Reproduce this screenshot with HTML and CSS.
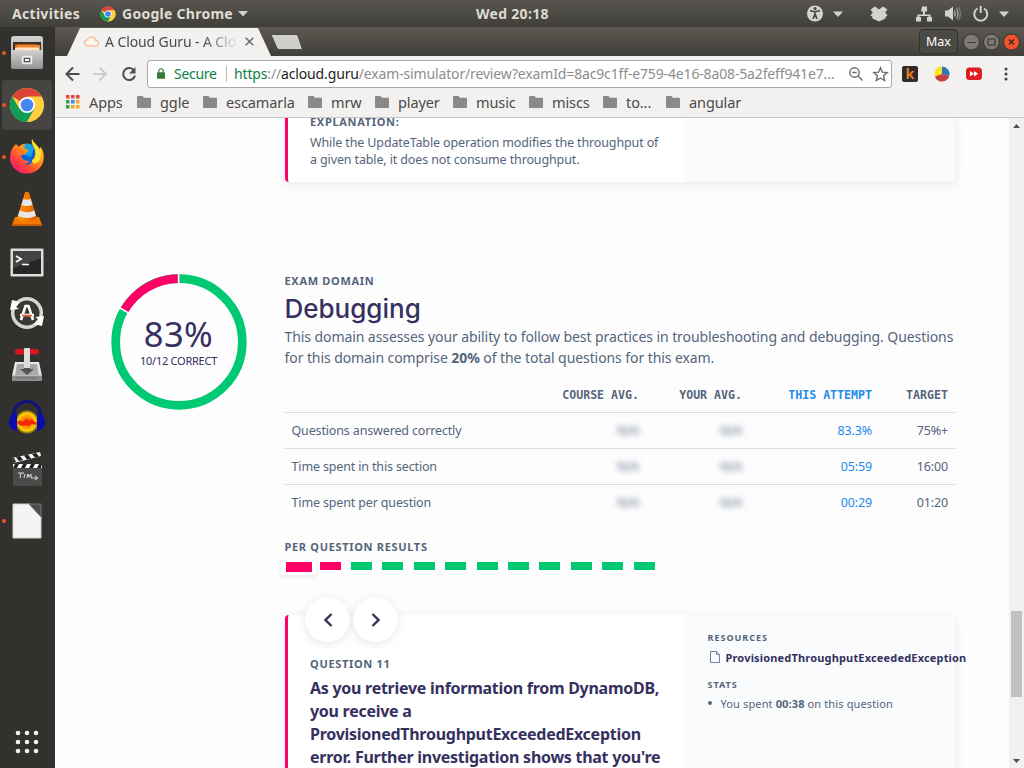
FILE: index.html
```html
<!DOCTYPE html>
<html lang="en">
<head>
<meta charset="utf-8">
<title>A Cloud Guru</title>
<link rel="stylesheet" href="styles.css">
</head>
<body>
<svg class="defs" width="0" height="0">
  <defs>
    <symbol id="chrome" viewBox="0 0 36 36">
      <circle cx="18" cy="18" r="17" fill="#ffcd40"/>
      <path d="M18 18 3.3 9.5A17 17 0 0 1 32.7 9.5H18Z" fill="#db4437"/>
      <path d="M3.3 9.5A17 17 0 0 0 18 35L25.3 22.3 18 18 10.6 22.2Z" fill="#0f9d58"/>
      <path d="M18 10h14.9A17 17 0 0 1 18 35l7.3-12.6Z" fill="#ffcd40"/>
      <circle cx="18" cy="18" r="8" fill="#fff"/>
      <circle cx="18" cy="18" r="6.3" fill="#4285f4"/>
    </symbol>
    <symbol id="folder" viewBox="0 0 14 12">
      <path d="M1.2 0h4.3L7 1.8h5.8A1.2 1.2 0 0 1 14 3v7.8a1.2 1.2 0 0 1-1.2 1.2H1.2A1.2 1.2 0 0 1 0 10.800V1.200A1.200 1.200 0 0 1 1.200 0Z" fill="#8b8987"/>
    </symbol>
    <linearGradient id="metal" x1="0" y1="0" x2="0" y2="1"><stop offset="0" stop-color="#d2d2d2"/><stop offset="1" stop-color="#929292"/></linearGradient>
    <linearGradient id="fox" x1=".9" y1="0" x2=".1" y2="1"><stop offset="0" stop-color="#ffe226"/><stop offset=".45" stop-color="#ff8a16"/><stop offset=".75" stop-color="#ff3647"/><stop offset="1" stop-color="#e31587"/></linearGradient>
    <linearGradient id="cone" x1="0" x2="1"><stop offset="0" stop-color="#ff9a1c"/><stop offset=".5" stop-color="#f57900"/><stop offset="1" stop-color="#d85f00"/></linearGradient>
    <radialGradient id="wave"><stop offset="0" stop-color="#ff2a00"/><stop offset=".4" stop-color="#ff8a00"/><stop offset=".75" stop-color="#ffd400"/><stop offset="1" stop-color="#ffd400" stop-opacity=".1"/></radialGradient>
  </defs>
</svg>

<header class="panel">
  <span class="panel-activities">Activities</span>
  <svg class="panel-chrome" width="16" height="16"><use href="#chrome"/></svg>
  <span class="panel-app">Google Chrome</span>
  <svg class="panel-caret" width="10" height="6"><path d="M0 0h10L5 5.500Z" fill="#d5d3cf"/></svg>
  <span class="panel-clock">Wed 20:18</span>
  <span class="panel-tray">
    <svg width="209" height="20" viewBox="0 0 209 20">
      <circle cx="8" cy="9.500" r="8" fill="#d5d3cf"/>
      <circle cx="8" cy="4.500" r="1.600" fill="#4c4a44"/>
      <path d="M3 6.700 6.500 7.500h3L13 6.700M8 7.500v3M8 10l-2 5M8 10l2 5" stroke="#4c4a44" stroke-width="1.700" fill="none"/>
      <path d="M26 7.500h10L31 13Z" fill="#d5d3cf"/>
      <path d="m68 2.500-4.500 3 2.300 3-2.300 3 2 1.400v1.500l6.500 3 6.500-3v-1.500l2-1.400-2.300-3 2.300-3-4.500-3-4 3Z" fill="#d5d3cf"/>
      <path d="M115 2.500h5v5h-2v3h5.500v2.500h1.500v4.500h-5V13h1.500v-1h-9v1h1.500v4.500h-5V13h1.500v-2.500h5.500v-3h-2Z" fill="#d5d3cf"/>
      <path d="M138 6.500h3l5-4v14l-5-4h-3Z" fill="#d5d3cf"/>
      <path d="M147.500 6.500q1.500 3 0 6M149.500 4.500q3 5 0 10" stroke="#aaa8a3" stroke-width="1.300" fill="none"/><path d="M151.500 3q4 6.500 0 13" stroke="#7d7b76" stroke-width="1.300" fill="none"/>
      <path d="M170.500 4.500a6.500 6.500 0 1 0 6.500 0M173.700 2v7" stroke="#d5d3cf" stroke-width="2" fill="none"/>
      <path d="M192 7.500h10L197 13Z" fill="#d5d3cf"/>
    </svg>
  </span>
</header>

<div class="desktop">
  <nav class="dock">
    <div class="dock-item running"><svg width="34" height="36" viewBox="0 0 34 36"><rect x="1" y="1" width="32" height="33" rx="3" fill="url(#metal)"/><path d="M3 7h28v9H3Z" fill="#3b332b"/><path d="M5 9h22v7H5Z" fill="#b5590f"/><path d="M7 10h23v6H5Z" fill="#f5832c"/><path d="M5 12.500h24V16H5Z" fill="#ffe5c4"/><path d="M1 15h32v17a2 2 0 0 1-2 2H3a2 2 0 0 1-2-2Z" fill="url(#metal)"/><rect x="12.500" y="21.500" width="9" height="7" rx="1" fill="none" stroke="#eee" stroke-width="1.500"/><rect x="14.500" y="23.500" width="5" height="3" fill="#f2f2f2" stroke="#555"/></svg></div>
    <div class="dock-item running active"><svg width="36" height="36"><use href="#chrome"/></svg></div>
    <div class="dock-item running"><svg width="36" height="38" viewBox="0 0 36 38"><circle cx="18" cy="20" r="14" fill="#0a63d8"/><path d="M13 7q8-4 12 3l-3 9-9-3Z" fill="#12a5e8"/><path d="M23 1c-1 5 2 7 3 11 1 5-1 9-3 10 1 4-5 6-8 4 3 0 4-2 6-3-4 0-8-1-9-5 1-2 3-1 5-2 0-2 2-2 3-4l-4-1q-1-2 0-5c-3 0-5 1-6 3L7 6C1 11 0 19 2 25c4 11 17 13 25 8 9-5 9-16 6-22l-2-2v3C29 7 25 6 23 1Z" fill="url(#fox)"/><path d="M23 1c-1 5 2 7 3 11 2 6-1 10-3 10 0 5 5 5 8-1s1-8 0-12v3C29 7 25 6 23 1Z" fill="#ffe02c"/></svg></div>
    <div class="dock-item"><svg width="32" height="36" viewBox="0 0 32 36"><path d="M4 26h24l3 8H1Z" fill="#f57900"/><path d="M1 33h30v2H1Z" fill="#c95c00"/><path d="M14 1.500q2-1.500 4 0l8 26q-10 6-20 0Z" fill="url(#cone)"/><path d="m12.300 8-1.800 6q5.500 2 11 0l-1.800-6q-3.700 1.500-7.400 0ZM8.700 19.500l-1.600 5.500q9 4 17.800 0l-1.600-5.500q-7.300 3.500-14.600 0Z" fill="#e6e6e6"/></svg></div>
    <div class="dock-item low"><svg width="34" height="30" viewBox="0 0 34 30"><rect x=".5" y=".5" width="33" height="28" rx="1" fill="#dcdcda"/><rect x="3" y="3" width="28" height="23" fill="#262626"/><path d="M3 3h28v7L3 20Z" fill="#444"/><path d="m6 8 5 3-5 3" stroke="#fff" stroke-width="1.800" fill="none"/><path d="M12 16.500h7" stroke="#fff" stroke-width="1.600"/></svg></div>
    <div class="dock-item"><svg width="34" height="34" viewBox="0 0 34 34"><circle cx="17" cy="17" r="14.300" fill="#3a3935" stroke="#d6d6d3" stroke-width="3.500"/><path d="M2 4 0 14l9-1-3-2 4-5Z" fill="#fff"/><path d="m32 30 2-10-9 1 3 2-4 5Z" fill="#fff"/><path d="m11 24 4.500-14h3L23 24M10 19h14" stroke="#fff" stroke-width="2.600" fill="none"/><path d="M12 19.500h10" stroke="#e8541b" stroke-width="1.500"/></svg></div>
    <div class="dock-item"><svg width="32" height="34" viewBox="0 0 32 34"><path d="M4 14h24l3 14H1Z" fill="#e8e8e8"/><path d="M6 16h20l2 11H4Z" fill="#a8a8a8"/><path d="M1 27.500h30V33H1Z" fill="#8c8c8c"/><path d="M5 30h22" stroke="#555" stroke-dasharray="1 1"/><path d="M13 14h6v7h4l-7 6-7-6h4Z" fill="#555"/><path d="M13 3h6v17h-6Z" fill="#dcdcdc"/><rect x="4" y="1" width="24" height="5.500" rx="2.700" fill="#d9161c"/><rect x="13" y="0" width="6" height="9" rx="1" fill="#dedede"/></svg></div>
    <div class="dock-item"><svg width="38" height="34" viewBox="0 0 38 34"><ellipse cx="19" cy="22" rx="12" ry="12" fill="url(#wave)"/><path d="m9 22 3-2 3 2 3-3 3 2 3-2 3 3 2 0-1 3-4-1-3 2-3-1-4 1-3-1Z" fill="#f32a00"/><path d="M5 18C5-4 33-4 33 18" stroke="#10107e" stroke-width="3" fill="none"/><path d="M9 13v18q-8-1-8-9t8-9ZM29 13v18q8-1 8-9t-8-9Z" fill="#0c0cb0"/></svg></div>
    <div class="dock-item"><svg width="32" height="36" viewBox="0 0 32 36"><rect x="2" y="17" width="29" height="18" rx="1" fill="#4b4b4a"/><path d="M2 13h29v4H2Z" fill="#fff"/><path d="M4 13h4l-2 4H2ZM12 13h4l-2 4h-4ZM20 13h4l-2 4h-4ZM28 13h3l-1 4h-4Z" fill="#222"/><path d="M1 7 29 1l1 4L3 12Z" fill="#f2f2f2"/><path d="m5 6 4-1 3 4-4 1ZM13 4.500l4-1 3 4-4 1ZM21 3l4-1 3 3.500-4 1ZM1 7h2l2 4-2 1Z" fill="#222"/><path d="M7 22h6M10 22l-1 5M14 23l-1 4M16 27l1-4 1 3 2-3v4M20 27h6M24 25l3 2-3 2" stroke="#ddd" fill="none"/></svg></div>
    <div class="dock-item running"><svg width="30" height="36" viewBox="0 0 30 36"><path d="M1 1h17l11 12v22H1Z" fill="#f4f4f4" stroke="#d0d0d0"/><path d="M17 1h12v13Z" fill="#4d4d4d" stroke="#777"/></svg></div>
    <svg class="dock-grid" width="24" height="24" viewBox="0 0 24 24" fill="#f2f1ef"><circle cx="3" cy="3" r="2.300"/><circle cx="12" cy="3" r="2.300"/><circle cx="21" cy="3" r="2.300"/><circle cx="3" cy="12" r="2.300"/><circle cx="12" cy="12" r="2.300"/><circle cx="21" cy="12" r="2.300"/><circle cx="3" cy="21" r="2.300"/><circle cx="12" cy="21" r="2.300"/><circle cx="21" cy="21" r="2.300"/></svg>
  </nav>

  <main class="window">
    <div class="titlebar">
      <div class="tab">
        <svg width="16" height="11" viewBox="0 0 18 12"><path d="M4.500 11h9.500a3 3 0 0 0 .5-6A5 5 0 0 0 5 4 3.600 3.600 0 0 0 4.500 11Z" fill="#fff6ef" stroke="#fab48c" stroke-width="1.300"/></svg>
        <span class="tab-title">A Cloud Guru - A Clo</span>
        <svg width="9" height="9" viewBox="0 0 9 9"><path d="m.7.700 7.600 7.600m0-7.600L.7 8.300" stroke="#6b6a68" stroke-width="1.500"/></svg>
      </div>
      <svg class="new-tab" width="34" height="16" viewBox="0 0 34 16"><path d="M1 .500h25q1.500 0 2 1.500l4.500 13.500H9q-1.500 0-2-1.500Z" fill="#d0cecc" stroke="#34332f" stroke-width=".7"/></svg>
      <div class="win-controls">
        <span class="user">Max</span>
        <svg width="58" height="20" viewBox="0 0 58 20"><g fill="#7c7a73" stroke="#35342f"><circle cx="9.500" cy="10" r="8"/><circle cx="29.500" cy="10" r="8"/></g><circle cx="49.500" cy="10" r="8" fill="#f0532d" stroke="#35342f"/><path d="M5.500 10.500h8M26 7h7v6h-7Z" stroke="#3a3934" stroke-width="1.200" fill="none"/><path d="m47 7.500 5 5m0-5-5 5" stroke="#3a2a20" stroke-width="1.300"/></svg>
      </div>
    </div>

    <div class="toolbar">
      <svg class="nav-icons" width="72" height="16" viewBox="0 0 72 16" fill="none" stroke-width="2"><path d="M14.500 8H2M8 1.500 1.500 8 8 14.500" stroke="#4f4d4b"/><path d="M28 8h12.500M34.500 1.500 41 8l-6.500 6.500" stroke="#cfcdcb"/><path d="M69 4.500A6 6 0 1 0 70 9.500" stroke="#4f4d4b"/><path d="M70.500 1v6.500H64Z" fill="#4f4d4b" stroke="none"/></svg>
      <div class="omnibox">
        <svg width="8" height="11" viewBox="0 0 9 12"><rect y="4.500" width="9" height="7.500" rx=".8" fill="#2f7d36"/><path d="M2 5V3.200a2.500 2.500 0 0 1 5 0V5" stroke="#2f7d36" stroke-width="1.300" fill="none"/></svg>
        <span class="secure">Secure</span>
        <span class="omni-sep"></span>
        <span class="url"><span class="scheme">https</span>://<span class="host">acloud.guru</span>/exam-simulator/review?examId=8ac9c1ff-e759-4e16-8a08-5a2feff941e7...</span>
        <svg class="omni-icons" width="42" height="16" viewBox="0 0 42 16" fill="none" stroke="#6a6a6a" stroke-width="1.400"><circle cx="6.500" cy="6.500" r="4.700"/><path d="m10 10 4.500 4.500M4.300 6.500h4.400"/><path d="m32.500 1.800 1.900 4.400 4.800.4-3.600 3.200 1.100 4.700-4.200-2.500-4.200 2.500 1.100-4.700-3.600-3.200 4.800-.4Z"/></svg>
      </div>
      <div class="extensions">
        <span class="ext-k">k</span>
        <svg width="16" height="16" viewBox="0 0 16 16"><path d="M8 8V.500A7.500 7.500 0 0 1 15.200 10Z" fill="#2f76b5"/><path d="M8 8V.500A7.500 7.500 0 0 0 .9 10.500Z" fill="#f8e81c"/><path d="M8 8 .9 10.500a7.500 7.500 0 0 0 14.300-.5Z" fill="#c5403f"/></svg>
        <svg width="16" height="14" viewBox="0 0 16 14"><rect y=".5" width="16" height="12.500" rx="3.500" fill="#df1d22"/><path d="m4 4 4 2.800-4 2.800ZM8 4l4.200 2.800L8 9.600Z" fill="#fff"/></svg>
        <svg width="4" height="14" viewBox="0 0 4 14" fill="#4a4846"><circle cx="2" cy="2" r="1.600"/><circle cx="2" cy="7" r="1.600"/><circle cx="2" cy="12" r="1.600"/></svg>
      </div>
    </div>

    <div class="bookmarks">
      <svg width="14" height="14" viewBox="0 0 14 14"><path d="M0 0h3.500v3.500H0ZM5 0h3.500v3.500H5ZM10 0h3.500v3.500H10Z" fill="#e8453c"/><path d="M0 5h3.500v3.500H0ZM0 10h3.500v3.500H0Z" fill="#34a04f"/><path d="M5 5h3.500v3.500H5Z" fill="#4285f4"/><path d="M10 5h3.500v3.500H10ZM5 10h3.500v3.500H5ZM10 10h3.500v3.500H10Z" fill="#f6a623"/></svg>
      <span class="bm w-apps">Apps</span>
      <svg width="14" height="12"><use href="#folder"/></svg><span class="bm w-ggle">ggle</span>
      <svg width="14" height="12"><use href="#folder"/></svg><span class="bm w-esc">escamarla</span>
      <svg width="14" height="12"><use href="#folder"/></svg><span class="bm w-mrw">mrw</span>
      <svg width="14" height="12"><use href="#folder"/></svg><span class="bm w-player">player</span>
      <svg width="14" height="12"><use href="#folder"/></svg><span class="bm w-music">music</span>
      <svg width="14" height="12"><use href="#folder"/></svg><span class="bm w-miscs">miscs</span>
      <svg width="14" height="12"><use href="#folder"/></svg><span class="bm w-to">to...</span>
      <svg width="14" height="12"><use href="#folder"/></svg><span class="bm w-angular">angular</span>
    </div>

    <div class="viewport">
      <div class="page">
        <article class="card card-prev">
          <div class="card-body">
            <h4 class="label explanation">EXPLANATION:</h4>
            <p class="small-copy">While the UpdateTable operation modifies the throughput of<br>a given table, it does not consume throughput.</p>
          </div>
          <aside class="card-side"></aside>
        </article>

        <section class="domain">
          <div class="gauge">
            <svg width="136" height="136" viewBox="0 0 136 136" fill="none">
              <circle cx="68" cy="68" r="63.300" stroke="#00c974" stroke-width="8.700"/>
              <path d="M68 4.700A63.300 63.300 0 0 0 13.180 36.350" stroke="#ff0066" stroke-width="8.700"/>
              <path d="M67.600 0v10M8.500 33.800l9 5.100" stroke="#fff" stroke-width="1.600"/>
            </svg>
            <div class="gauge-text"><span class="gauge-pct">83%</span><span class="gauge-sub">10/12 CORRECT</span></div>
          </div>
          <div class="domain-body">
            <h4 class="label label-domain">EXAM DOMAIN</h4>
            <h2 class="domain-title">Debugging</h2>
            <p class="domain-copy">This domain assesses your ability to follow best practices in troubleshooting and debugging. Questions<br>for this domain comprise <b>20%</b> of the total questions for this exam.</p>
            <div class="stats">
              <div class="row head"><span></span><span>COURSE AVG.</span><span>YOUR AVG.</span><span class="blue">THIS ATTEMPT</span><span>TARGET</span></div>
              <div class="row"><span>Questions answered correctly</span><span class="na">N/A</span><span class="na">N/A</span><span class="blue">83.3%</span><span>75%+</span></div>
              <div class="row"><span>Time spent in this section</span><span class="na">N/A</span><span class="na">N/A</span><span class="blue">05:59</span><span>16:00</span></div>
              <div class="row"><span>Time spent per question</span><span class="na">N/A</span><span class="na">N/A</span><span class="blue">00:29</span><span>01:20</span></div>
            </div>
            <h4 class="label label-results">PER QUESTION RESULTS</h4>
            <div class="results">
              <span class="current"><i></i></span><i class="wrong"></i><i></i><i></i><i></i><i></i><i></i><i></i><i></i><i></i><i></i><i></i>
            </div>
          </div>
        </section>

        <article class="card card-next">
          <div class="card-nav">
            <span class="round"><svg width="10" height="14" viewBox="0 0 10 14"><path d="M8.500 1 2.500 7l6 6" stroke="#35315f" stroke-width="2.400" fill="none"/></svg></span>
            <span class="round"><svg width="10" height="14" viewBox="0 0 10 14"><path d="m1.500 1 6 6-6 6" stroke="#35315f" stroke-width="2.400" fill="none"/></svg></span>
          </div>
          <div class="card-body">
            <h4 class="label label-question">QUESTION 11</h4>
            <p class="question">As you retrieve information from DynamoDB,<br>you receive a<br>ProvisionedThroughputExceededException<br>error. Further investigation shows that you're</p>
          </div>
          <aside class="card-side">
            <h5 class="mini">RESOURCES</h5>
            <div class="resource"><svg width="10" height="12" viewBox="0 0 10 12"><path d="M.5.500h6l3 3v8h-9ZM6.500.500v3h3" fill="none" stroke="#6d87a3"/></svg><a>ProvisionedThroughputExceededException</a></div>
            <h5 class="mini mini-stats">STATS</h5>
            <div class="stat"><span class="dot"></span><span>You spent <b>00:38</b> on this question</span></div>
          </aside>
        </article>
      </div>
      <div class="scrollbar">
        <svg width="7" height="4"><path d="M0 4h7L3.500 0Z" fill="#505050"/></svg>
        <span class="thumb"></span>
        <svg width="7" height="4"><path d="M0 0h7L3.500 4Z" fill="#505050"/></svg>
      </div>
    </div>
  </main>
</div>
</body>
</html>
```
FILE: styles.css
```css
* { box-sizing: border-box; margin: 0; padding: 0; }
body {
  width: 1024px; height: 768px; overflow: hidden;
  display: flex; flex-direction: column;
  font-family: "Noto Sans", sans-serif; color: #54657a; background: #fdfdfe;
  white-space: nowrap;
}
svg { display: block; flex: none; }
.defs { position: absolute; }

/* Desktop panel */
.panel {
  height: 27px; flex: none; display: flex; align-items: center;
  background: linear-gradient(#57554e, #403f3a);
  color: #dfdbd2; font-size: 14px; font-weight: 700; letter-spacing: .3px;
}
.panel-activities { width: 88px; padding-left: 12px; }
.panel-chrome { margin-left: 12px; }
.panel-app { margin-left: 6px; width: 111px; letter-spacing: .27px; }
.panel-caret { margin-left: 5px; }
.panel-clock { margin-left: 228px; width: 331px; padding-bottom: 1px; }
.panel-tray { display: block; height: 20px; }

.desktop { flex: 1; display: flex; min-height: 0; }
.dock { width: 55px; padding-right: 1px; flex: none; background: #33312d; display: flex; flex-direction: column; align-items: center; }
.dock-item { width: 50px; height: 50px; margin: 1px 0; border-radius: 4px; display: flex; align-items: center; justify-content: center; position: relative; flex: none; }
.dock-item.active { background: #474541; }
.dock-item.low { padding-top: 3px; }
.dock-item.running::before { content: ""; position: absolute; left: 0; top: 23px; width: 4px; height: 4px; border-radius: 50%; background: #e95420; }
.dock-grid { margin-top: auto; margin-bottom: 14px; }

/* Browser chrome */
.window { flex: 1; min-width: 0; display: flex; flex-direction: column; }
.titlebar { height: 29px; flex: none; display: flex; background: linear-gradient(#5b5951, #413f39); }
.tab {
  margin: 1px 0 0 12px; width: 204px; height: 28px; padding: 0 16px 1px; flex: none;
  display: flex; align-items: center; background: #f2f1f0;
  clip-path: polygon(13px 0, 191px 0, 204px 100%, 0 100%);
}
.tab-title {
  margin-left: 6px; width: 140px; overflow: hidden; font-size: 14px; letter-spacing: -.1px; color: #4a4a4a;
  -webkit-mask-image: linear-gradient(90deg, #000 98px, transparent 134px);
}
.new-tab { margin-top: 7px; margin-left: -1px; }
.win-controls { margin-left: auto; display: flex; align-items: center; gap: 4px; padding-right: 4px; }
.user { width: 39px; height: 25px; border: 1px solid #32312d; border-radius: 4px; color: #fff; font-size: 12.5px; line-height: 23px; text-align: center; background: #4b4943; }
.toolbar { height: 36px; flex: none; padding-left: 10px; display: flex; align-items: center; background: #f2f1f0; }
.nav-icons { margin-right: 10px; }
.omnibox { width: 745px; height: 28px; border: 1px solid #a9a7a5; border-radius: 3px; background: #fff; display: flex; align-items: center; padding: 0 0 1px 9px; font-size: 14px; flex: none; }
.secure { margin-left: 9px; width: 52px; color: #0b8043; letter-spacing: -.3px; }
.omni-sep { width: 1px; height: 16px; background: #bbb; }
.url { margin-left: 7px; width: 612px; letter-spacing: -.15px; color: #8d8d8d; }
.scheme { color: #0b8043; }
.host { color: #222; }
.omni-icons { margin-left: 2px; }
.extensions { display: flex; align-items: center; margin-left: 10px; gap: 16px; }
.extensions svg:last-child { margin-left: 6px; }
.ext-k { width: 16px; height: 16px; border-radius: 2px; background: #2e2c2a; color: #f58220; font: 600 15px/15px "Noto Sans", sans-serif; text-align: center; }
.bookmarks { height: 26px; flex: none; padding-left: 11px; padding-bottom: 5px; display: flex; align-items: center; background: #f2f1f0; border-bottom: 1px solid #c8c7c6; font-size: 14.5px; letter-spacing: -.1px; color: #4a4a4a; }
.bm { margin-left: 9px; flex: none; }
.w-apps { width: 48px; }
.w-ggle { width: 43px; }
.w-esc { width: 82px; }
.w-mrw { width: 44px; }
.w-player { width: 55px; }
.w-music { width: 53px; }
.w-miscs { width: 51px; }
.w-to { width: 40px; }
.w-angular { width: 60px; }

/* Page */
.viewport { flex: 1; min-height: 0; display: flex; background: #fdfdfe; }
.page { flex: 1; min-width: 0; overflow: hidden; display: flex; flex-direction: column; }
.scrollbar { width: 15px; flex: none; background: #f1f1f1; display: flex; flex-direction: column; align-items: center; padding: 6px 0 5px; }
.thumb { width: 11px; height: 86px; background: #c1c1c1; margin-top: 483px; margin-bottom: auto; }

.card { width: 670px; margin-left: 230px; flex: none; display: flex; position: relative; background: #fff; border-left: 3px solid #ff0066; box-shadow: 0 2px 10px rgba(50, 50, 93, .1); }
.card-prev { height: 64px; border-radius: 0 0 4px 4px; }
.card-next { height: 300px; margin-top: 39px; border-radius: 4px 4px 0 0; }
.card-body { width: 397px; padding-left: 22px; flex: none; }
.card-side { flex: 1; min-width: 0; background: #fafbfd; padding: 17px 0 0 22.500px; }
.label { font-size: 11px; line-height: 14px; font-weight: 700; letter-spacing: .68px; }
.explanation { margin-top: -3px; }
.small-copy { margin-top: 5px; font-size: 12.5px; line-height: 17px; letter-spacing: -.13px; }

.domain { display: flex; margin-top: 92px; flex: none; }
.gauge { width: 136px; height: 136px; margin: 0 37.500px 0 56px; flex: none; display: grid; color: #35315f; }
.gauge > * { grid-area: 1 / 1; }
.gauge-text { display: flex; flex-direction: column; align-items: center; padding: 40px 1px 0 0; }
.gauge-pct { font-size: 34.5px; line-height: 40px; letter-spacing: .4px; }
.gauge-sub { font-size: 11px; line-height: 14px; letter-spacing: -.25px; }
.domain-body { width: 670.500px; }
.domain-title { margin-top: 5px; font: 500 26px/32px Inter, sans-serif; color: #35315f; }
.domain-copy { margin-top: 1px; font-size: 14px; line-height: 21px; letter-spacing: -.08px; }
.stats { margin-top: 9px; font-size: 12.5px; letter-spacing: -.15px; }
.row { height: 36px; padding: 0 7px; display: grid; grid-template-columns: 1fr 110px 103px 130px 76px; align-items: center; text-align: right; border-top: 1px solid #dcdddf; }
.row > :first-child { text-align: left; }
.row.head { height: 35px; border-top: 0; font: 700 11.6px "DejaVu Sans Mono", monospace; letter-spacing: 0; }
.blue { color: #1f8ceb; }
.na { filter: blur(3px); }
.label-results { margin-top: 20px; }
.results { margin-top: 8px; height: 14px; padding-left: .8px; display: flex; gap: 10.400px; }
.results i { width: 21px; height: 8px; background: #00c974; flex: none; }
.results .wrong { background: #ff0066; margin-left: -7px; }
.results .current { width: 35px; height: 18px; margin: -5px 0 0 -4px; padding: 5px 4.500px; background: #fff; box-shadow: 0 2px 4px rgba(50, 50, 93, .1); flex: none; }
.current i { display: block; width: 26px; height: 10px; background: #ff0066; }

.card-nav { position: absolute; left: 17px; top: -18px; display: flex; gap: 3px; }
.round { width: 45px; height: 45px; border-radius: 50%; background: #fff; box-shadow: 0 2px 8px rgba(50, 50, 93, .12); display: flex; align-items: center; justify-content: center; }
.label-question { margin-top: 42px; }
.question { margin-top: 6px; font-size: 16px; line-height: 23px; font-weight: 700; letter-spacing: -.27px; color: #35315f; }
.mini { font-size: 9px; line-height: 12px; font-weight: 700; letter-spacing: 1px; }
.resource { display: flex; align-items: center; height: 16px; margin-top: 5px; padding-left: 2px; gap: 6px; font-size: 11px; font-weight: 700; letter-spacing: .17px; color: #35315f; }
.mini-stats { margin-top: 14px; }
.stat { display: flex; align-items: center; height: 16px; margin-top: 4px; font-size: 11px; letter-spacing: .13px; }
.dot { width: 4px; height: 4px; border-radius: 50%; background: #54657a; margin-right: 9px; }
```
